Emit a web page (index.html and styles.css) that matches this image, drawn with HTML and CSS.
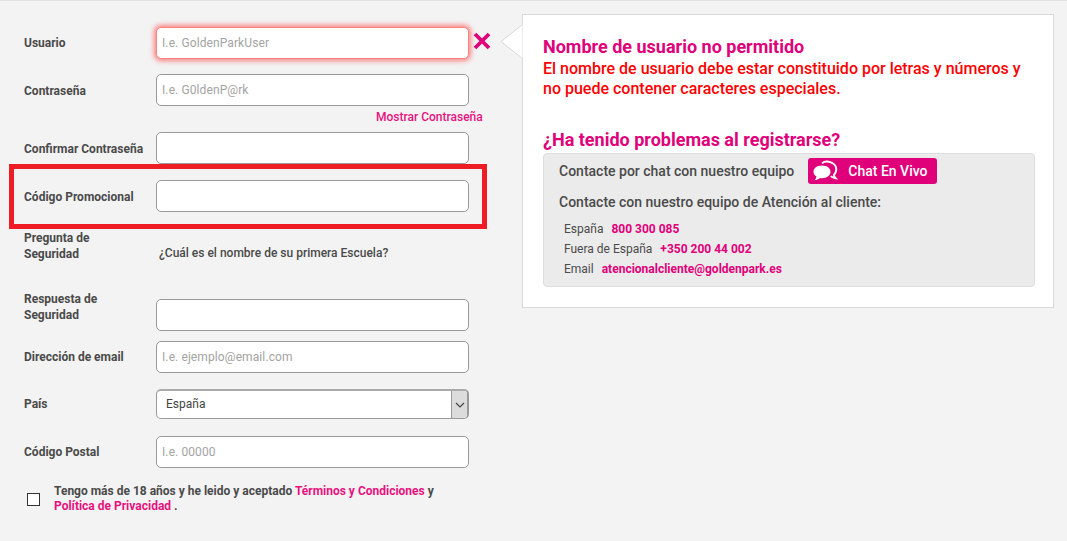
FILE: index.html
```html
<!DOCTYPE html>
<html lang="es">
<head>
<meta charset="utf-8">
<title>Registro</title>
<link rel="stylesheet" href="styles.css">
</head>
<body>
<main class="page">
  <form class="form">
    <div class="row row-user">
      <label class="label">Usuario</label>
      <div class="field field-error"><span class="ph">I.e. GoldenParkUser</span></div>
      <svg class="cross" width="18" height="18" viewBox="0 0 18 18"><path d="M2 2 16 16M16 2 2 16" stroke="#e0007a" stroke-width="3.8" fill="none"/></svg>
    </div>
    <div class="row row-pass">
      <label class="label label-low">Contraseña</label>
      <div class="field"><span class="ph">I.e. G0ldenP@rk</span></div>
    </div>
    <a class="show-pass">Mostrar Contraseña</a>
    <div class="row row-confirm">
      <label class="label label-low">Confirmar Contraseña</label>
      <div class="field"></div>
    </div>
    <div class="row row-promo">
      <label class="label label-low">Código Promocional</label>
      <div class="field"></div>
      <div class="highlight"></div>
    </div>
    <div class="row row-question">
      <label class="label label-wrap">Pregunta de Seguridad</label>
      <div class="question">¿Cuál es el nombre de su primera Escuela?</div>
    </div>
    <div class="row row-answer">
      <label class="label label-wrap">Respuesta de Seguridad</label>
      <div class="field"></div>
    </div>
    <div class="row row-email">
      <label class="label">Dirección de email</label>
      <div class="field"><span class="ph">I.e. ejemplo@email.com</span></div>
    </div>
    <div class="row row-country">
      <label class="label">País</label>
      <div class="field field-select">
        <span class="select-value">España</span>
        <span class="select-arrow"><svg width="10" height="6" viewBox="0 0 10 6"><path d="M1 1 5 5 9 1" stroke="#444" stroke-width="1.2" fill="none"/></svg></span>
      </div>
    </div>
    <div class="row row-postal">
      <label class="label">Código Postal</label>
      <div class="field"><span class="ph">I.e. 00000</span></div>
    </div>
    <div class="terms">
      <span class="checkbox"></span>
      <p class="terms-text">Tengo más de 18 años y he leido y aceptado <a class="link">Términos y Condiciones</a> y <a class="link">Política de Privacidad</a> .</p>
    </div>
  </form>

  <aside class="panel">
    <svg class="arrow" width="23" height="35" viewBox="0 0 23 35"><path d="M22.500 .5 1 17.500 22.500 34.500" fill="#fff" stroke="#d9d9d9"/></svg>
    <h2 class="title">Nombre de usuario no permitido</h2>
    <p class="error">El nombre de usuario debe estar constituido por letras y números y no puede contener caracteres especiales.</p>
    <h2 class="title title-help">¿Ha tenido problemas al registrarse?</h2>
    <div class="help">
      <div class="chat-line">
        <span>Contacte por chat con nuestro equipo</span>
        <a class="chat-btn">
          <svg width="28" height="22" viewBox="0 0 28 22"><path d="M10 5.500C4.800 5.500 1.500 8.300 1.500 11.800c0 2 1.100 3.700 2.900 4.800C4.300 18 3.500 19.300 2.500 20.300c2.200-.2 4-1 5.400-2.300.7.100 1.400.2 2.100.2 5.200 0 8.500-2.900 8.500-6.400S15.200 5.500 10 5.500Z" fill="#fff"/><path d="M10 3.200C12 1.600 14.500 1.200 17 1.800c4.500.9 7.500 4.200 7.200 8.200-.1 2-1 3.700-2.300 5 .2 1.200.8 2.300 1.700 3.200-2-.2-3.700-1-4.800-2.100" stroke="#fff" stroke-width="2" fill="none"/></svg>
          <span class="chat-label">Chat En Vivo</span>
        </a>
      </div>
      <div class="contact-title">Contacte con nuestro equipo de Atención al cliente:</div>
      <ul class="contact-list">
        <li>España <b class="pink">800 300 085</b></li>
        <li>Fuera de España <b class="pink">+350 200 44 002</b></li>
        <li>Email <b class="pink">atencionalcliente@goldenpark.es</b></li>
      </ul>
    </div>
  </aside>
</main>
</body>
</html>
```

FILE: styles.css
```css
* { box-sizing: border-box; }
html, body { margin: 0; padding: 0; }
body {
  width: 1067px;
  height: 541px;
  overflow: hidden;
  background: #f3f3f3;
  border-top: 1px solid #e2e2e2;
  font-family: Roboto, "Liberation Sans", sans-serif;
  color: #4a4a4a;
}
.page {
  display: flex;
  align-items: flex-start;
}
.form {
  width: 522px;
  flex: none;
  padding: 26px 0 0 24px;
  display: flex;
  flex-direction: column;
}
.row {
  position: relative;
  display: flex;
  align-items: center;
  min-height: 32px;
}
.label {
  width: 132px;
  flex: none;
  font-size: 12px;
  font-weight: 700;
  line-height: 16px;
}
.label-low { margin-top: 2px; }
.label-wrap { width: 100px; margin-right: 32px; }
.field {
  width: 313px;
  height: 32px;
  flex: none;
  display: flex;
  align-items: center;
  padding-left: 5px;
  background: #fff;
  border: 1px solid #999;
  border-radius: 5px;
  font-size: 12px;
}
.ph { color: #a3a3a3; letter-spacing: .1px; }
.field-error {
  border-color: #ff8080;
  box-shadow: 0 0 5px 2px rgba(255, 70, 70, .65);
}
.cross { position: absolute; left: 449px; top: 5px; }
.row-pass { margin-top: 15px; }
.show-pass {
  align-self: flex-start;
  margin: 2px 0 0 352px;
  height: 18px;
  line-height: 18px;
  font-size: 12px;
  font-weight: 500;
  color: #e8127f;
}
.row-confirm { margin-top: 6px; }
.row-promo { margin-top: 16px; }
.highlight {
  position: absolute;
  left: -15px;
  top: -16px;
  width: 478px;
  height: 65px;
  border: 5px solid #ee1c25;
}
.row-question { margin-top: 18px; align-items: flex-end; }
.question { font-size: 12px; padding-left: 3px; padding-bottom: 2px; font-weight: 500; }
.row-answer { margin-top: 37px; }
.row-answer .label { margin-top: -16px; }
.row-email { margin-top: 10px; }
.row-country { margin-top: 15px; }
.field-select {
  height: 30px;
  padding-left: 0;
  overflow: hidden;
  justify-content: space-between;
  border-right-width: 2px;
  border-top-width: 2px;
  border-top-color: #aaa;
}
.select-value { padding: 0 0 2px 9px; color: #444; font-weight: 400; }
.select-arrow {
  width: 16px;
  height: 100%;
  display: flex;
  align-items: center;
  justify-content: center;
  background: #dcdcdc;
  border-left: 1px solid #999;
}
.row-postal { margin-top: 16px; }
.terms {
  display: flex;
  align-items: center;
  margin-top: 16px;
  padding-left: 3px;
}
.checkbox {
  width: 13px;
  height: 13px;
  flex: none;
  background: #fff;
  border: 1px solid #333;
  margin-right: 14px;
}
.terms-text {
  margin: 0;
  width: 420px;
  font-size: 12px;
  font-weight: 700;
  line-height: 15px;
}
.link { color: #e8127f; }
.panel {
  position: relative;
  width: 532px;
  height: 294px;
  margin-top: 13px;
  padding: 21px 18px 0 20px;
  background: #fff;
  border: 1px solid #d9d9d9;
  flex: none;
}
.arrow {
  position: absolute;
  left: -23px;
  top: 9px;
}
.title {
  margin: 0;
  font-size: 18px;
  font-weight: 700;
  line-height: 22px;
  color: #e0007a;
}
.error {
  margin: 1px 0 0;
  font-size: 16px;
  font-weight: 500;
  line-height: 20px;
  color: #f00;
}
.title-help { margin-top: 30px; }
.help {
  height: 134px;
  margin-top: 2px;
  padding: 4px 15px 0;
  background: #ebebeb;
  border: 1px solid #dedede;
  border-radius: 4px;
  font-size: 14px;
  font-weight: 500;
}
.chat-line { display: flex; align-items: center; gap: 14px; }
.chat-btn {
  width: 129px;
  height: 26px;
  display: flex;
  align-items: center;
  padding-left: 4px;
  background: #e0007a;
  border-radius: 3px;
  color: #fff;
}
.chat-label { margin-left: 8px; font-size: 14px; font-weight: 500; }
.contact-title { margin-top: 10px; }
.contact-list {
  list-style: none;
  margin: 9px 0 0;
  padding: 0 0 0 5px;
  font-size: 12px;
  font-weight: 400;
}
.contact-list li { height: 20px; line-height: 20px; }
.pink { margin-left: 5px; color: #e0007a; font-weight: 700; }
```
